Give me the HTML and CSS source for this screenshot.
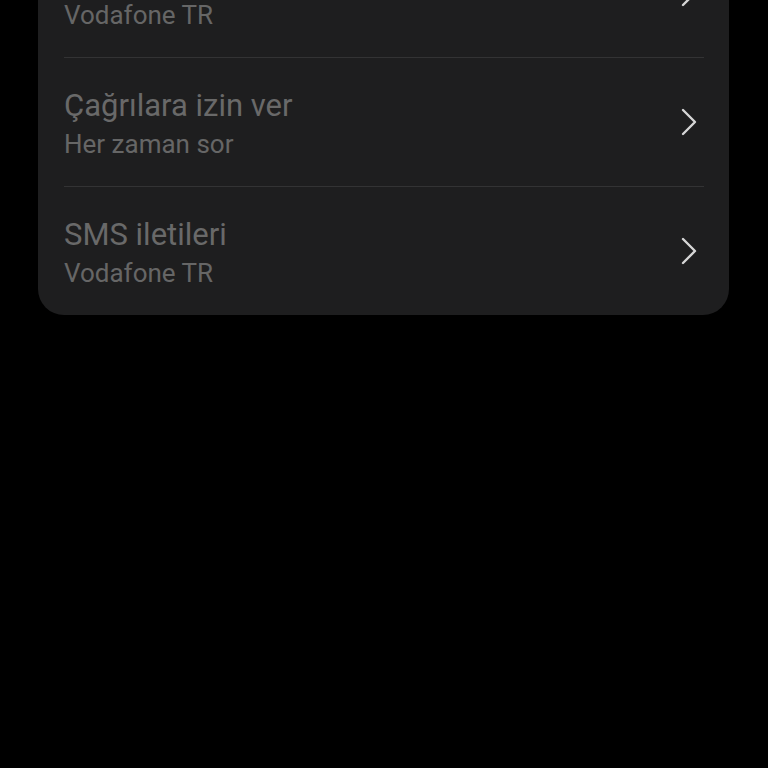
FILE: index.html
```html
<!DOCTYPE html>
<html>
<head>
    <title>Mesaj ayarları</title>
    <link rel="stylesheet" href="styles.css">
</head>
<body>
    <div class="card">
        <div class="row">
            <div class="texts">
                <div class="title">Mesajlar</div>
                <div class="subtitle">Vodafone TR</div>
            </div>
            <svg class="chevron" viewBox="0 0 16 28"><path d="M2 2 L14 14 L2 26" /></svg>
        </div>
        <div class="row">
            <div class="texts">
                <div class="title">Çağrılara izin ver</div>
                <div class="subtitle">Her zaman sor</div>
            </div>
            <svg class="chevron" viewBox="0 0 16 28"><path d="M2 2 L14 14 L2 26" /></svg>
        </div>
        <div class="row">
            <div class="texts">
                <div class="title">SMS iletileri</div>
                <div class="subtitle">Vodafone TR</div>
            </div>
            <svg class="chevron" viewBox="0 0 16 28"><path d="M2 2 L14 14 L2 26" /></svg>
        </div>
    </div>
</body>
</html>
```
FILE: styles.css
```css
body {
    margin: 0;
    background-color: #000;
    font-family: Roboto, "Liberation Sans", sans-serif;
    height: 768px;
    overflow: hidden;
}
.card {
    margin: -71px 39px 0 38px;
    background-color: #1e1e1f;
    border-radius: 0 0 26px 26px;
    padding: 0 25px 0 26px;
}
.row {
    display: flex;
    align-items: center;
    justify-content: space-between;
    height: 128px;
    border-bottom: 1px solid #333334;
}
.row:last-child {
    border-bottom: none;
}
.texts {
    display: flex;
    flex-direction: column;
    gap: 5px;
    padding-top: 3px;
}
.title {
    font-size: 31px;
    line-height: 36px;
    color: #696969;
}
.subtitle {
    font-size: 26px;
    line-height: 30px;
    color: #666;
}
.chevron {
    width: 16px;
    height: 28px;
    margin-right: 7px;
    fill: none;
    stroke: #d6d6d6;
    stroke-width: 2.4;
    stroke-linecap: round;
    stroke-linejoin: round;
}
```
